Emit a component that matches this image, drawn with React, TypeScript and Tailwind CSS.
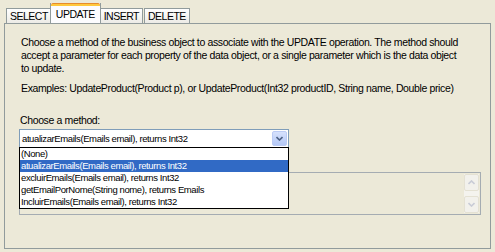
import React from 'react';

const items = [
  '(None)',
  'atualizarEmails(Emails email), returns Int32',
  'excluirEmails(Emails email), returns Int32',
  'getEmailPorNome(String nome), returns Emails',
  'IncluirEmails(Emails email), returns Int32',
];

const Tab: React.FC<{ label: string; active?: boolean; first?: boolean }> = ({ label, active, first }) => {
  if (active) {
    return (
      <div className="relative -mx-[2px] z-10 flex h-[20px] flex-col border-x border-[#919B9C] bg-[#FCFCFE]">
        <div className="h-[3px] rounded-t-[2px] bg-[#FFC83C] border-t border-[#E68B2C]" />
        <div className="flex flex-1 items-center px-[5px] pb-[1px] text-black">{label}</div>
      </div>
    );
  }
  return (
    <div
      className={`mt-[4px] flex h-[15px] items-center border-x border-t border-[#919B9C] bg-gradient-to-b from-white to-[#ECEBE6] px-[3px] ${
        first ? 'ml-[2px]' : 'ml-[1px]'
      }`}
    >
      {label}
    </div>
  );
};

const ArrowBtn: React.FC<{ up?: boolean }> = ({ up }) => (
  <div className="flex h-[17px] w-[15px] items-center justify-center rounded-[2px] border border-[#E4E1D3] bg-[#F2F1EC]">
    <svg width="7" height="5" viewBox="0 0 7 5">
      <path d={up ? 'M0.5 4 L3.5 1 L6.5 4' : 'M0.5 1 L3.5 4 L6.5 1'} stroke="#C9CCD6" strokeWidth="1.6" fill="none" />
    </svg>
  </div>
);

export default function App() {
  return (
    <div
      className="h-[252px] w-[495px] overflow-hidden bg-[#ECE9D8] text-[10.5px] leading-[13px] tracking-[-0.37px] text-black"
      style={{ fontFamily: '"Liberation Sans", Arial, sans-serif' }}
    >
      {/* Tabs */}
      <div className="flex h-[23px] items-end pl-[4px] pt-[4px] tracking-[-0.5px]">
        <Tab label="SELECT" first />
        <Tab label="UPDATE" active />
        <Tab label="INSERT" />
        <Tab label="DELETE" />
      </div>

      {/* Panel */}
      <div className="mx-[4px] h-[226px] border border-[#919B9C] bg-[#ECE9D8] pl-[16px] pr-[4px] pt-[12px]">
        <p className="whitespace-nowrap">
          Choose a method of the business object to associate with the UPDATE operation. The method should
          <br />
          accept a parameter for each property of the data object, or a single parameter which is the data object
          <br />
          to update.
        </p>
        <p className="mt-[7px] whitespace-nowrap">
          Examples: UpdateProduct(Product p), or UpdateProduct(Int32 productID, String name, Double price)
        </p>
        <p className="mt-[19px] -ml-[1px]">Choose a method:</p>

        <div className="relative -ml-[2px] mt-[2px] text-[9.5px] tracking-[-0.4px]">
          {/* Combo box */}
          <div className="flex h-[19px] w-[270px] items-center border border-[#7F9DB9] bg-white pl-[2px] pr-[1px]">
            <span className="flex-1">atualizarEmails(Emails email), returns Int32</span>
            <div className="flex h-[15px] w-[15px] items-center justify-center rounded-[2px] bg-gradient-to-b from-[#D6E1FD] to-[#B4C8F6] border border-[#BBCBF5]">
              <svg width="7" height="5" viewBox="0 0 7 5">
                <path d="M0.5 1 L3.5 4 L6.5 1" stroke="#4D6185" strokeWidth="1.6" fill="none" />
              </svg>
            </div>
          </div>

          {/* Listbox behind */}
          <div className="mt-[24px] flex h-[43px] w-[462px] justify-end border border-[#A5ACB2] bg-[#ECE9D8] p-[1px]">
            <div className="flex w-[15px] flex-col justify-between bg-[#F4F3EE]">
              <ArrowBtn up />
              <ArrowBtn />
            </div>
          </div>

          {/* Dropdown list */}
          <div className="absolute left-0 top-[18px] z-20 w-[270px] border border-black bg-white">
            {items.map((it, i) => (
              <div
                key={it}
                className={`h-[12px] whitespace-nowrap pl-[1px] leading-[12px] ${i === 1 ? 'bg-[#316AC5] text-white' : ''}`}
              >
                {it}
              </div>
            ))}
          </div>
        </div>
      </div>
    </div>
  );
}
